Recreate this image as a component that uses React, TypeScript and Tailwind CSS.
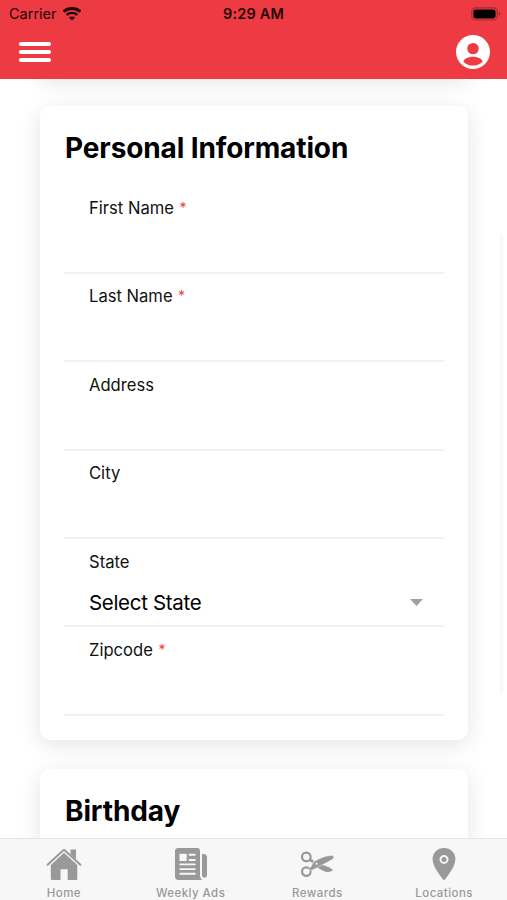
import React from 'react';
import { clsx } from 'clsx';

type Field = {
    label: string;
    required?: boolean;
    value?: string;
};

const fields: Field[] = [
    { label: 'First Name', required: true },
    { label: 'Last Name', required: true },
    { label: 'Address' },
    { label: 'City' },
    { label: 'State', value: 'Select State' },
    { label: 'Zipcode', required: true },
];

const WifiIcon = () => (
    <svg width="18" height="14" viewBox="0 0 18 14" fill="none" stroke="#240507">
        <path d="M.6 4.7C5.4.4 12.600.4 17.400 4.700" strokeWidth="2.8" />
        <path d="M3.6 8C6.6 5.2 11.4 5.2 14.4 8" strokeWidth="2.4" />
        <path d="M9 13.600 6 10.600c1.700-1.500 4.300-1.500 6 0z" fill="#240507" stroke="none" />
    </svg>
);

const BatteryIcon = () => (
    <svg width="30" height="14" viewBox="0 0 30 14">
        <rect x=".8" y=".8" width="25.4" height="12.2" rx="3.8" fill="none" stroke="#a32a30" strokeWidth="1.2" />
        <rect x="2.4" y="2.4" width="22.2" height="9" rx="2.4" fill="#000" />
        <path d="M27.8 4.8c2 .7 2 3.5 0 4.200z" fill="#a32a30" />
    </svg>
);

const AccountIcon = () => (
    <svg width="34" height="34" viewBox="0 0 34 34">
        <circle cx="17" cy="17" r="17" fill="#fff" />
        <circle cx="17" cy="13.6" r="5.7" fill="#ee3b43" />
        <path d="M7.3 26.4c1.5-3.1 5.2-4.6 9.7-4.6s8.2 1.500 9.700 4.600C24.500 29.100 21 30.600 17 30.600s-7.500-1.500-9.700-4.200z" fill="#ee3b43" />
    </svg>
);

const HomeIcon = () => (
    <svg width="36" height="34" viewBox="0 0 36 34" fill="#999">
        <path d="M1.6 17.7 17.3 3.2a1.1 1.1 0 0 1 1.400 0l15.700 14.500" fill="none" stroke="#999" strokeWidth="2" strokeLinecap="round" />
        <path d="M24.5 2.6h5.5v9.6l-5.5-5z" />
        <path d="M18 5.700 31.300 18v13.400c0 1-.6 1.600-1.600 1.600h-8V22.300h-7.200V33h-8c-1 0-1.700-.6-1.700-1.600V18z" />
    </svg>
);

const NewsIcon = () => (
    <svg width="34" height="34" viewBox="0 0 34 34" fill="#999">
        <path d="M4 1h19.200c1.700 0 2.800 1.100 2.800 2.800V28c0 2 .7 3.800 2.200 5H4.500C2.300 33 1 31.400 1 29.400V3.800C1 2.100 2.300 1 4 1z" />
        <path d="M28 7h1.800c1.900 0 3.200 1.300 3.200 3.200v17.600c0 1.800-1.100 3-2.500 3S28 29.600 28 27.800z" />
        <path d="M5.500 6.800h7.200V14H5.500zM14.800 6.800h6.800v1.900h-6.800zM14.800 12h6.800v2h-6.800z" fill="#f7f7f7" />
        <path d="M6.300 17.400h14.500M6.300 22.100h14.500M6.300 26.800h14.500" stroke="#f7f7f7" strokeWidth="1.900" strokeLinecap="round" />
    </svg>
);

const ScissorsIcon = () => (
    <svg width="34" height="34" viewBox="0 0 34 34" fill="#999">
        <circle cx="6.300" cy="9.900" r="4.300" fill="none" stroke="#999" strokeWidth="2.200" />
        <circle cx="6.300" cy="24.600" r="4.300" fill="none" stroke="#999" strokeWidth="2.200" />
        <path d="m9.500 12.700 3.800 2" stroke="#999" strokeWidth="2.800" />
        <path d="M17 17c5 .4 12 2.600 16 5.800-1.800 2.600-6.200 2.600-9.400 1.200l-8-4.200z" />
        <path d="M9 21.200c2.800-.5 2.600-5 5.300-6.800C20 11 28 7.800 32.800 8.600c1.400.8 1.200 2.800-.2 3.700-3.700 2.500-9.500 5-13.800 7.400-3 1.600-6.300 3.700-9.100 4.200z" stroke="#f7f7f7" strokeWidth=".5" />
        <circle cx="16.700" cy="16.800" r="1" fill="#f7f7f7" />
    </svg>
);

const PinIcon = () => (
    <svg width="24" height="34" viewBox="0 0 24 34">
        <path d="M12 1C5.600 1 .6 5.700.6 12c0 7.500 6.600 15 10.200 20.300.8 1 1.600 1 2.400 0C16.800 27 23.400 19.500 23.400 12 23.400 5.700 18.400 1 12 1z" fill="#999" />
        <circle cx="12" cy="12.400" r="3.500" fill="none" stroke="#f7f7f7" strokeWidth="2" />
    </svg>
);

const tabs = [
    { label: 'Home', icon: <HomeIcon /> },
    { label: 'Weekly Ads', icon: <NewsIcon /> },
    { label: 'Rewards', icon: <ScissorsIcon /> },
    { label: 'Locations', icon: <PinIcon /> },
];

const Header: React.FC = () => (
    <header className="z-10 h-[79px] shrink-0 bg-[#ee3b43]">
        <div className="grid h-[27px] grid-cols-3 items-center pr-[6px] pl-[9px] text-[#240507]">
            <div className="flex items-center gap-[6px]">
                <span className="text-[14.5px] leading-5">Carrier</span>
                <WifiIcon />
            </div>
            <span className="-ml-[3px] text-center text-[14.5px] leading-5 font-semibold tracking-[0.15px]">9:29 AM</span>
            <div className="flex justify-end">
                <BatteryIcon />
            </div>
        </div>
        <div className="flex h-[50px] items-center justify-between pr-[17px] pl-[19px]">
            <button aria-label="Menu" className="flex w-[32px] flex-col gap-[4.4px]">
                <span className="h-1 rounded-full bg-white" />
                <span className="h-1 rounded-full bg-white" />
                <span className="h-1 rounded-full bg-white" />
            </button>
            <button aria-label="Account">
                <AccountIcon />
            </button>
        </div>
    </header>
);

const Card: React.FC<{ title?: string; className?: string; children?: React.ReactNode }> = ({ title, className, children }) => (
    <section className={clsx('shrink-0 rounded-[10px] bg-white px-6 shadow-[0_5px_22px_rgba(0,0,0,0.11)]', className)}>
        {title && <h2 className="pt-[22px] pl-px text-[28px] leading-10 font-bold tracking-[-0.12px] text-black">{title}</h2>}
        {children}
    </section>
);

const FormRow: React.FC<{ field: Field }> = ({ field }) => (
    <div className="h-[88.4px] border-b-2 border-[#f1f1f1] pt-[10.5px] pr-[21px] pl-[25px]">
        <label className="flex text-[16.6px] leading-6 text-[#111]">
            {field.label}
            {field.required && <span className="ml-[5.5px] text-[14px] text-[#ee3b43]">*</span>}
        </label>
        {field.value && (
            <div className="mt-[15px] flex items-center justify-between text-[20.5px] leading-7 tracking-[-0.32px] text-black">
                <span>{field.value}</span>
                <svg width="13" height="7" viewBox="0 0 13 7">
                    <path d="M0 0h13L6.5 7z" fill="#a0a0a0" />
                </svg>
            </div>
        )}
    </div>
);

const TabBar: React.FC = () => (
    <nav className="z-10 grid h-[62px] shrink-0 grid-cols-4 border-t border-[#e4e4e4] bg-[#f7f7f7]">
        {tabs.map((tab) => (
            <button key={tab.label} className="flex flex-col items-center pt-2 pl-[1px]">
                {tab.icon}
                <span className="mt-[4px] text-[11.5px] leading-4 font-medium tracking-[0.45px] text-[#999]">{tab.label}</span>
            </button>
        ))}
    </nav>
);

export default function App() {
    return (
        <div className="flex h-[900px] w-[507px] flex-col overflow-hidden bg-white font-['Inter',sans-serif]">
            <Header />
            <main className="relative flex min-h-0 flex-1 flex-col overflow-hidden pr-[39px] pl-10">
                {/* bottom edge of the card that is scrolled out of view */}
                <Card className="-mt-[42px] mb-[29px] h-10" />
                <Card title="Personal Information" className="h-[634px]">
                    <div className="mt-[17.5px]">
                        {fields.map((field) => (
                            <FormRow key={field.label} field={field} />
                        ))}
                    </div>
                </Card>
                <Card title="Birthday" className="mt-[29px] h-[200px]" />
                <div className="absolute top-[155px] right-[3px] h-[460px] w-1 rounded-full border-l-2 border-[#f7f7f7] bg-[#fcfcfc]" />
            </main>
            <TabBar />
        </div>
    );
}
